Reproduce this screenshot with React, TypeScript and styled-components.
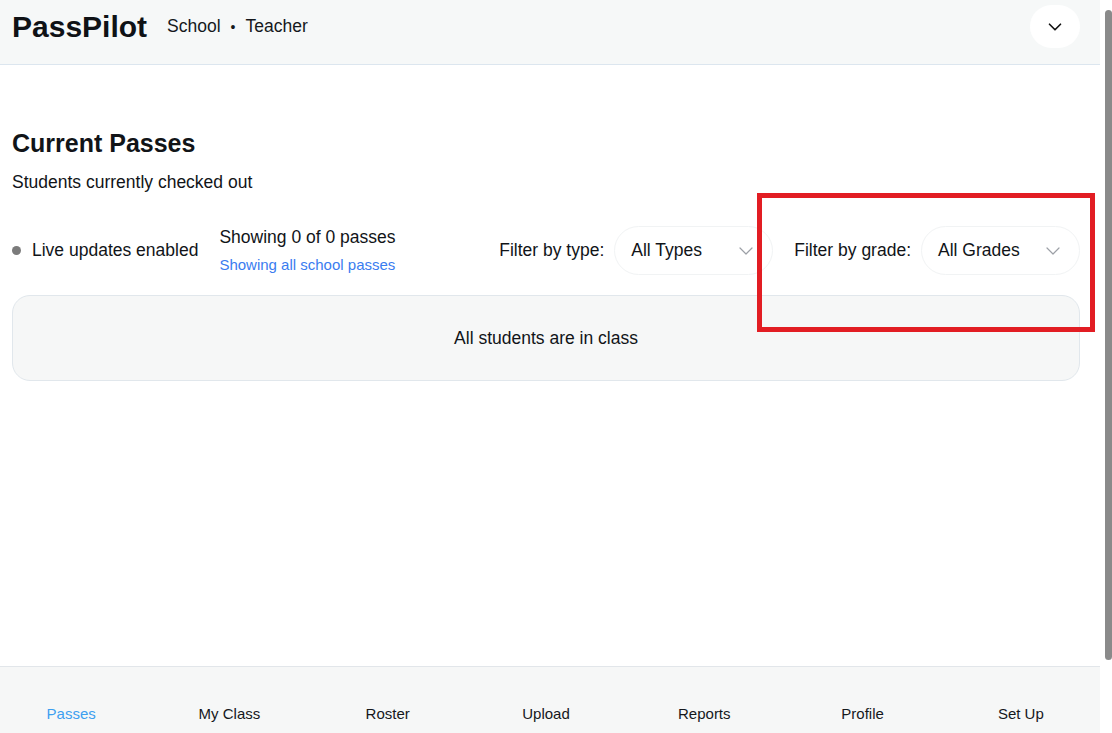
import React from "react";
import styled, { createGlobalStyle } from "styled-components";
import { ChevronDown } from "lucide-react";

const Global = createGlobalStyle`
  html, body { margin: 0; padding: 0; background: #ffffff; overflow: hidden; }
  body { font-family: "Liberation Sans", Arial, sans-serif; color: #111418; }
  * { box-sizing: border-box; }
`;

const Page = styled.div`
  position: relative;
  height: 100vh;
  padding-right: 12px;
  display: flex;
  flex-direction: column;
`;

const Scrollbar = styled.div`
  position: absolute;
  top: 0;
  right: 0;
  width: 12px;
  height: 100%;
  background: #ffffff;
`;

const Thumb = styled.div`
  position: absolute;
  top: 10px;
  right: 0;
  width: 7px;
  height: 650px;
  border-radius: 4px;
  background: #8a8a8a;
`;

const Header = styled.header`
  display: flex;
  align-items: center;
  justify-content: space-between;
  padding: 5px 20px 16px 12px;
  background: #f6f8f8;
  border-bottom: 1px solid #dce6ef;
`;

const Brand = styled.div`
  display: flex;
  align-items: center;
  gap: 20px;
`;

const Logo = styled.h1`
  margin: 0;
  font-size: 30px;
  font-weight: 700;
  line-height: 1;
  color: #0f1216;
`;

const Context = styled.div`
  font-size: 17.5px;
  color: #15181c;
  display: flex;
  align-items: center;
`;

const Sep = styled.span`
  margin: 0 10px;
  font-size: 14px;
`;

const MenuButton = styled.button`
  width: 50px;
  height: 43px;
  border: none;
  border-radius: 9999px;
  background: #ffffff;
  display: flex;
  align-items: center;
  justify-content: center;
  padding: 0;
  color: #111;
`;

const Main = styled.main`
  flex: 1;
  padding: 63px 20px 0 12px;
`;

const Title = styled.h2`
  margin: 0;
  font-size: 25px;
  line-height: 30px;
  font-weight: 700;
  color: #111418;
`;

const Subtitle = styled.p`
  margin: 11px 0 0;
  font-size: 17.5px;
  line-height: 26px;
`;

const Toolbar = styled.div`
  margin-top: 31px;
  display: flex;
  align-items: center;
  justify-content: space-between;
`;

const Group = styled.div<{ $gap: number }>`
  display: flex;
  align-items: center;
  gap: ${(p) => p.$gap}px;
`;

const Live = styled.div`
  display: flex;
  align-items: center;
  gap: 11px;
  font-size: 17.5px;
`;

const Dot = styled.span`
  width: 9px;
  height: 9px;
  border-radius: 50%;
  background: #7b7b7b;
`;

const Counts = styled.div`
  display: flex;
  flex-direction: column;
  gap: 8px;
  margin-top: -1px;
`;

const CountText = styled.div`
  font-size: 17.5px;
  line-height: 22px;
`;

const Link = styled.a`
  font-size: 15px;
  line-height: 18px;
  color: #3a7cf0;
  text-decoration: none;
`;

const Filter = styled.label`
  display: flex;
  align-items: center;
  gap: 10px;
  font-size: 17.5px;
`;

const Select = styled.div`
  width: 159px;
  height: 49px;
  border: 1px solid #f1f3f4;
  border-radius: 9999px;
  background: #fff;
  display: flex;
  align-items: center;
  justify-content: space-between;
  padding: 0 14px 0 16px;
  font-size: 17.5px;
  color: #111418;
`;

const Card = styled.section`
  margin-top: 20px;
  height: 86px;
  border: 1px solid #e1e7ec;
  border-radius: 18px;
  background: #f6f7f7;
  display: flex;
  align-items: center;
  justify-content: center;
  font-size: 17.5px;
`;

const Footer = styled.nav`
  height: 67px;
  background: #f6f7f7;
  border-top: 1px solid #e2e6ea;
  display: grid;
  grid-template-columns: repeat(7, 1fr);
  align-items: end;
  padding-bottom: 10px;
  margin-left: -8px;
`;

const NavItem = styled.a<{ $active?: boolean }>`
  text-align: center;
  font-size: 15px;
  line-height: 18px;
  color: ${(p) => (p.$active ? "#3d9ff0" : "#15181c")};
  text-decoration: none;
`;

const Highlight = styled.div`
  position: absolute;
  left: 757px;
  top: 193px;
  width: 338px;
  height: 139px;
  border: 5px solid #e21d23;
  pointer-events: none;
`;

const tabs = ["Passes", "My Class", "Roster", "Upload", "Reports", "Profile", "Set Up"];

export default function App() {
  return (
    <Page>
      <Global />
      <Header>
        <Brand>
          <Logo>PassPilot</Logo>
          <Context>
            School<Sep>•</Sep>Teacher
          </Context>
        </Brand>
        <MenuButton aria-label="menu">
          <ChevronDown size={22} strokeWidth={1.8} />
        </MenuButton>
      </Header>
      <Main>
        <Title>Current Passes</Title>
        <Subtitle>Students currently checked out</Subtitle>
        <Toolbar>
          <Group $gap={21}>
            <Live>
              <Dot />
              Live updates enabled
            </Live>
            <Counts>
              <CountText>Showing 0 of 0 passes</CountText>
              <Link href="#">Showing all school passes</Link>
            </Counts>
          </Group>
          <Group $gap={21}>
            <Filter>
              Filter by type:
              <Select>
                All Types
                <ChevronDown size={24} strokeWidth={1.2} color="#9ca0a6" />
              </Select>
            </Filter>
            <Filter>
              Filter by grade:
              <Select>
                All Grades
                <ChevronDown size={24} strokeWidth={1.2} color="#9ca0a6" />
              </Select>
            </Filter>
          </Group>
        </Toolbar>
        <Card>All students are in class</Card>
      </Main>
      <Footer>
        {tabs.map((t, i) => (
          <NavItem key={t} href="#" $active={i === 0}>
            {t}
          </NavItem>
        ))}
      </Footer>
      <Highlight />
      <Scrollbar>
        <Thumb />
      </Scrollbar>
    </Page>
  );
}
